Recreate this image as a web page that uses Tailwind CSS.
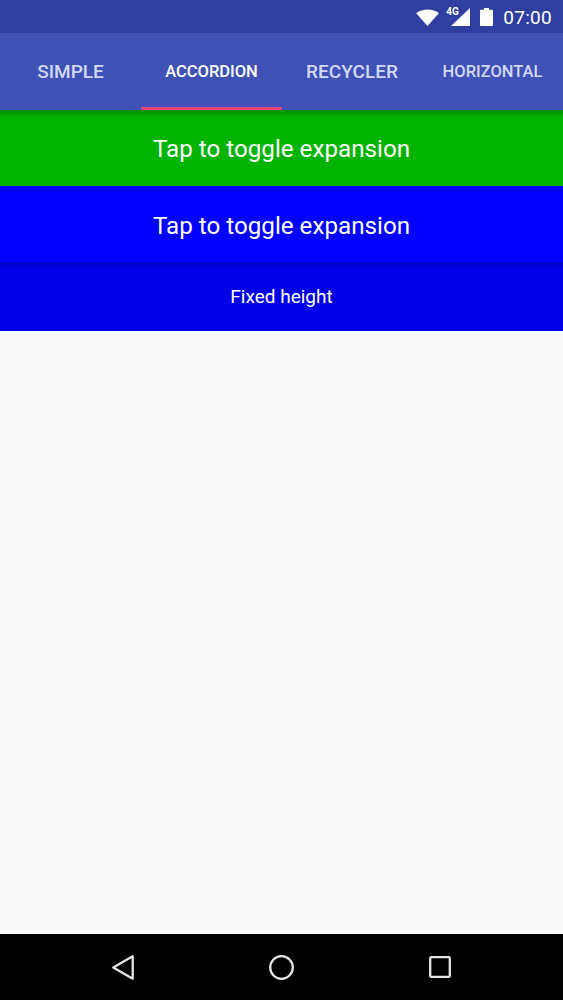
<!DOCTYPE html>
<html lang="en">
<head>
  <meta charset="utf-8" />
  <meta name="viewport" content="width=device-width, initial-scale=1" />
  <title>Accordion</title>
  <script src="https://cdn.jsdelivr.net/npm/@tailwindcss/browser@4"></script>
</head>
<body class="m-0 p-0 font-['Roboto',sans-serif] bg-[#fafafb]">
  <div class="w-[563px] h-[1000px] flex flex-col overflow-hidden">
    <!-- Status bar -->
    <div class="h-[33px] bg-[#303f9f] flex items-center justify-end text-white shrink-0 pt-[1px]">
      <svg class="w-[25px] h-[17px] mr-[11px] mt-[1px]" viewBox="0 0 24 18"><path d="M0 4.500C3.500 1.800 7.500 0.500 12 0.500s8.500 1.300 12 4L12 18z" fill="#fff"/></svg>
      <div class="relative w-[19px] h-[18px] mr-[10px]">
        <svg class="absolute left-0 top-0 w-[19px] h-[18px]" viewBox="0 0 19 18"><path d="M19 0V18H0z" fill="#fff"/></svg>
        <span class="absolute left-[-5px] top-[-1px] text-[10px] leading-[10px] font-bold">4G</span>
      </div>
      <svg class="w-[13px] h-[18px] mr-[10px]" viewBox="0 0 13 20" preserveAspectRatio="none"><path d="M4 0h5v2h3a1 1 0 0 1 1 1v16a1 1 0 0 1-1 1H1a1 1 0 0 1-1-1V3a1 1 0 0 1 1-1h3z" fill="#fff"/></svg>
      <span class="text-[19px] leading-none font-normal mr-[11px] tracking-[0.3px]">07:00</span>
    </div>

    <!-- Tabs -->
    <div class="h-[77px] bg-[#3f51b5] grid grid-cols-[141px_141px_140px_141px] shrink-0 text-center font-medium text-[#d3d9f5]">
      <div class="flex items-center justify-center text-[19px] pt-[2px]">SIMPLE</div>
      <div class="flex items-center justify-center text-[16.500px] text-white border-b-[3px] border-[#e0457b] pt-[5px]">ACCORDION</div>
      <div class="flex items-center justify-center text-[19px] pt-[2px]">RECYCLER</div>
      <div class="flex items-center justify-center text-[16.500px] pt-[2px]">HORIZONTAL</div>
    </div>

    <!-- Content -->
    <div class="relative flex-1 flex flex-col">
      <div class="absolute left-0 right-0 top-0 h-[8px] bg-gradient-to-b from-black/20 to-transparent"></div>
      <div class="h-[76px] bg-[#00b300] flex items-center justify-center text-white text-[24.200px] pt-[2px]">Tap to toggle expansion</div>
      <div class="h-[76px] bg-[#0000ff] flex items-center justify-center text-white text-[24.200px] pt-[4px]">Tap to toggle expansion</div>
      <div class="relative h-[69px] bg-[#0000e6] flex items-center justify-center text-white text-[19px] pt-[2px]">
        <div class="absolute left-0 right-0 top-0 h-[7px] bg-gradient-to-b from-black/15 to-transparent"></div>
        Fixed height
      </div>
      <div class="flex-1 bg-[#fafafb]"></div>
    </div>

    <!-- Nav bar -->
    <div class="h-[66px] bg-black flex items-center justify-center shrink-0">
      <svg class="w-[22px] h-[25px] mr-[135px]" viewBox="0 0 22 25" fill="none" stroke="#e5e5e5" stroke-width="2.300" stroke-linejoin="round"><path d="M20.700 1.300V23.700L1.300 12.500z"/></svg>
      <svg class="w-[25px] h-[25px] mr-[135px]" viewBox="0 0 25 25" fill="none" stroke="#e5e5e5" stroke-width="2.300"><circle cx="12.500" cy="12.500" r="11.300"/></svg>
      <svg class="w-[22px] h-[22px]" viewBox="0 0 22 22" fill="none" stroke="#e5e5e5" stroke-width="2.300" stroke-linejoin="round"><rect x="1.200" y="1.200" width="19.600" height="19.600" rx="1"/></svg>
    </div>
  </div>
</body>
</html>
